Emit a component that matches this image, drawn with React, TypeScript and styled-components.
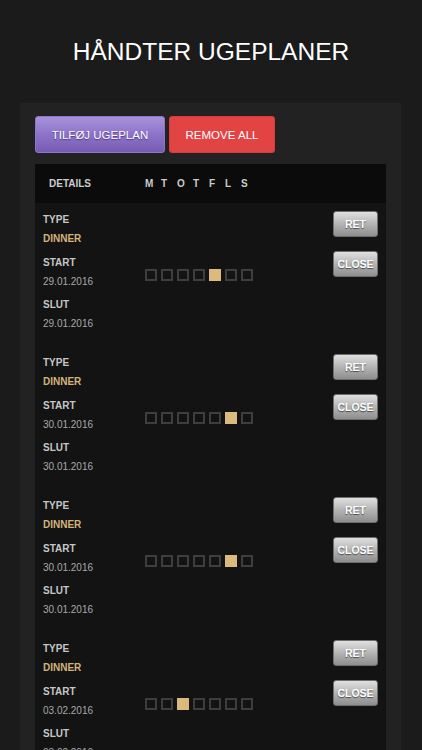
import React from 'react';
import styled, { createGlobalStyle } from 'styled-components';

const GlobalStyle = createGlobalStyle`
  html, body {
    margin: 0;
    padding: 0;
    background: #1b1b1b;
    overflow: hidden;
  }
  body {
    font-family: "Liberation Sans", Arial, sans-serif;
  }
`;

// Layout
const Page = styled.div`
  width: 422px;
  height: 750px;
  background: #1b1b1b;
  display: flex;
  flex-direction: column;
  overflow: hidden;
`;

const Title = styled.h1`
  margin: 0;
  padding: 37px 0 0 0;
  height: 103px;
  flex-shrink: 0;
  box-sizing: border-box;
  text-align: center;
  color: #ffffff;
  font-size: 24.5px;
  font-weight: 400;
  line-height: 30px;
`;

const Panel = styled.div`
  flex: 1;
  min-height: 0;
  margin: 0 21px 0 20px;
  background: #222222;
  padding: 13px 15px 0 15px;
`;

const Toolbar = styled.div`
  display: flex;
  gap: 4px;
  margin-bottom: 11px;
`;

const ActionButton = styled.button<{ $variant: 'purple' | 'red' }>`
  height: 37px;
  border-radius: 3px;
  border: 1px solid ${p => (p.$variant === 'purple' ? '#8c76cc' : '#d83c3c')};
  background: ${p =>
    p.$variant === 'purple'
      ? 'linear-gradient(to bottom, #a892dd 0%, #8a70c7 55%, #765cb3 100%)'
      : '#e24444'};
  color: #ffffff;
  font-family: "Liberation Sans", Arial, sans-serif;
  font-size: 11.5px;
  padding: 0;
  width: ${p => (p.$variant === 'purple' ? '130px' : '106px')};
  text-shadow: ${p => (p.$variant === 'purple' ? '0 1px 1px rgba(40, 20, 80, 0.6)' : 'none')};
  cursor: pointer;
`;

const Table = styled.div`
  display: flex;
  flex-direction: column;
`;

const HeaderRow = styled.div`
  display: flex;
  align-items: center;
  height: 39px;
  background: #0b0b0b;
  padding-left: 14px;
`;

const HeaderLabel = styled.div`
  width: 96px;
  color: #cccccc;
  font-size: 10px;
  font-weight: 700;
  line-height: 12px;
`;

const DayLetters = styled.div`
  display: flex;
`;

const DayLetter = styled.span`
  width: 16px;
  color: #cccccc;
  font-size: 10px;
  font-weight: 700;
  line-height: 12px;
`;

const Row = styled.div`
  display: flex;
  align-items: stretch;
  height: 143px;
  flex-shrink: 0;
  box-sizing: border-box;
  background: #131313;
  padding: 7px 8px 0 8px;
`;

const Details = styled.div`
  width: 102px;
  display: flex;
  flex-direction: column;
`;

const Field = styled.div`
  display: flex;
  flex-direction: column;
  margin-bottom: 4.5px;
`;

const FieldLabel = styled.div`
  color: #c6c6c6;
  font-size: 10px;
  font-weight: 700;
  line-height: 19px;
`;

const FieldValue = styled.div<{ $accent?: boolean }>`
  color: ${p => (p.$accent ? '#d4b27c' : '#a9a9a9')};
  font-size: 10px;
  font-weight: ${p => (p.$accent ? 700 : 400)};
  line-height: 19px;
`;

const Days = styled.div`
  flex: 1;
  display: flex;
  align-items: center;
  gap: 4px;
  margin-top: -6px;
`;

const DayBox = styled.span<{ $on: boolean }>`
  width: 12px;
  height: 12px;
  box-sizing: border-box;
  border: 2px solid ${p => (p.$on ? '#dcb97c' : '#3e3e3e')};
  background: ${p => (p.$on ? '#dcb97c' : 'transparent')};
`;

const Buttons = styled.div`
  display: flex;
  flex-direction: column;
  gap: 14px;
  padding-top: 1px;
`;

const GreyButton = styled.button`
  width: 45px;
  height: 26px;
  padding: 0;
  border-radius: 3px;
  border: 1px solid #6e6e6e;
  background: linear-gradient(to bottom, #e0e0e0 0%, #b4b4b4 50%, #8e8e8e 100%);
  color: #ffffff;
  font-family: "Liberation Sans", Arial, sans-serif;
  font-size: 10.5px;
  font-weight: 700;
  text-shadow: 0 1px 1px rgba(0, 0, 0, 0.55);
  cursor: pointer;
`;

const days = ['M', 'T', 'O', 'T', 'F', 'L', 'S'];

const plans = [
  { type: 'DINNER', start: '29.01.2016', end: '29.01.2016', day: 4 },
  { type: 'DINNER', start: '30.01.2016', end: '30.01.2016', day: 5 },
  { type: 'DINNER', start: '30.01.2016', end: '30.01.2016', day: 5 },
  { type: 'DINNER', start: '03.02.2016', end: '03.02.2016', day: 2 },
];

const App: React.FC = () => {
  return (
    <Page>
      <GlobalStyle />
      <Title>HÅNDTER UGEPLANER</Title>

      <Panel>
        <Toolbar>
          <ActionButton $variant="purple">TILFØJ UGEPLAN</ActionButton>
          <ActionButton $variant="red">REMOVE ALL</ActionButton>
        </Toolbar>

        <Table>
          <HeaderRow>
            <HeaderLabel>DETAILS</HeaderLabel>
            <DayLetters>
              {days.map((d, i) => (
                <DayLetter key={i}>{d}</DayLetter>
              ))}
            </DayLetters>
          </HeaderRow>

          {plans.map((plan, i) => (
            <Row key={i}>
              <Details>
                <Field>
                  <FieldLabel>TYPE</FieldLabel>
                  <FieldValue $accent>{plan.type}</FieldValue>
                </Field>
                <Field>
                  <FieldLabel>START</FieldLabel>
                  <FieldValue>{plan.start}</FieldValue>
                </Field>
                <Field>
                  <FieldLabel>SLUT</FieldLabel>
                  <FieldValue>{plan.end}</FieldValue>
                </Field>
              </Details>

              <Days>
                {days.map((_, d) => (
                  <DayBox key={d} $on={d === plan.day} />
                ))}
              </Days>

              <Buttons>
                <GreyButton>RET</GreyButton>
                <GreyButton>CLOSE</GreyButton>
              </Buttons>
            </Row>
          ))}
        </Table>
      </Panel>
    </Page>
  );
};

export default App;
